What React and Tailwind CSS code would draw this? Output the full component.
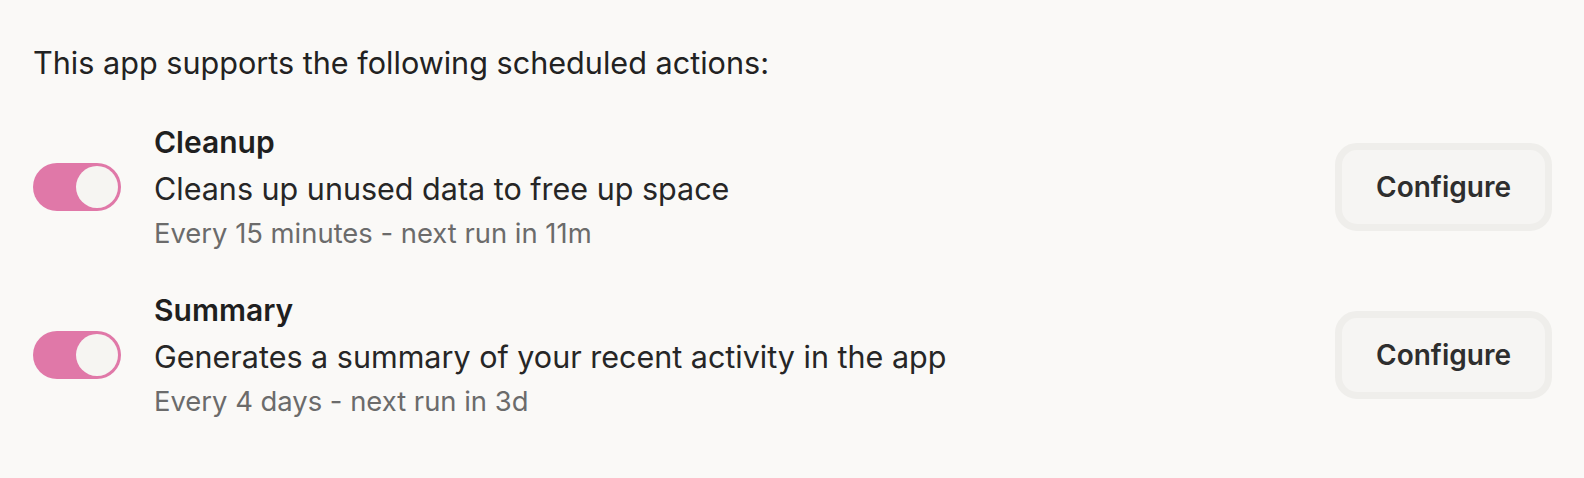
import React from "react";

function Toggle() {
  return (
    <div className="flex h-[48px] w-[88px] shrink-0 items-center justify-end rounded-full bg-[#e078a8] p-[3px]">
      <div className="h-[42px] w-[42px] rounded-full bg-[#f6f5f2]" />
    </div>
  );
}

function Row({ title, desc, sub }) {
  return (
    <div className="flex items-center">
      <Toggle />
      <div className="ml-[33px] flex flex-1 flex-col">
        <div className="text-[30px] font-semibold leading-[36px] text-[#1f1f1f]">{title}</div>
        <div className="mt-[11px] text-[30.5px] leading-[36px] text-[#262626]">{desc}</div>
        <div className="mt-[10px] text-[27.4px] leading-[32px] text-[#6b6b6b]">{sub}</div>
      </div>
      <button className="h-[88px] w-[217px] rounded-[22px] border-[7px] border-[#efeeeb] bg-[#f6f5f3] text-[28px] font-semibold text-[#2e2e2e]">
        Configure
      </button>
    </div>
  );
}

export default function App() {
  return (
    <div
      className="h-[478px] w-[1584px] bg-[#faf9f7] pl-[33px] pr-[32px] pt-[45px]"
      style={{ fontFamily: "Inter, 'Noto Sans', sans-serif" }}
    >
      <div className="text-[30.6px] leading-[36px] text-[#222]">
        This app supports the following scheduled actions:
      </div>
      <div className="mt-[43px] flex flex-col gap-[43px]">
        <Row
          title="Cleanup"
          desc="Cleans up unused data to free up space"
          sub="Every 15 minutes - next run in 11m"
        />
        <Row
          title="Summary"
          desc="Generates a summary of your recent activity in the app"
          sub="Every 4 days - next run in 3d"
        />
      </div>
    </div>
  );
}
